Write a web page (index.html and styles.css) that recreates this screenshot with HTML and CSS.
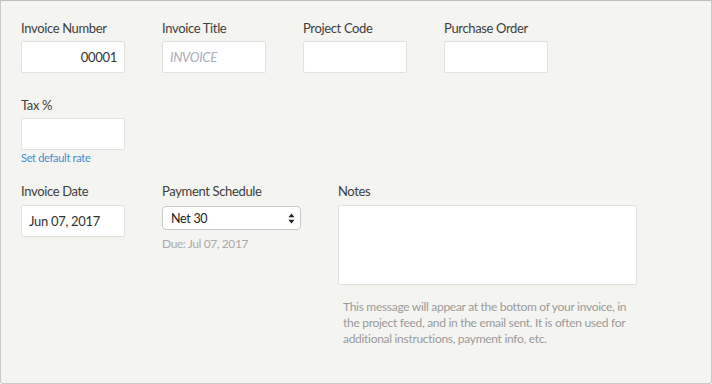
FILE: index.html
```html
<!DOCTYPE html>
<html lang="en">
<head>
    <meta charset="UTF-8">
    <title>Invoice Details</title>
    <link rel="stylesheet" href="styles.css">
</head>
<body>
    <div class="panel">
        <div class="row">
            <div class="field">
                <label>Invoice Number</label>
                <div class="input num">00001</div>
            </div>
            <div class="field">
                <label>Invoice Title</label>
                <div class="input placeholder">INVOICE</div>
            </div>
            <div class="field">
                <label>Project Code</label>
                <div class="input"></div>
            </div>
            <div class="field">
                <label>Purchase Order</label>
                <div class="input"></div>
            </div>
        </div>

        <div class="row tax-row">
            <div class="field">
                <label>Tax %</label>
                <div class="input"></div>
                <a class="link">Set default rate</a>
            </div>
        </div>

        <div class="row date-row">
            <div class="field">
                <label>Invoice Date</label>
                <div class="input date">Jun 07, 2017</div>
            </div>
            <div class="field wide">
                <label>Payment Schedule</label>
                <div class="select">
                    <span>Net 30</span>
                    <svg width="7" height="11" viewBox="0 0 7 11">
                        <path d="M3.5 0.5 L6.5 4.2 L0.5 4.2 Z" fill="#222"/>
                        <path d="M3.5 10.5 L6.5 6.8 L0.5 6.8 Z" fill="#222"/>
                    </svg>
                </div>
                <div class="due">Due: Jul 07, 2017</div>
            </div>
            <div class="field notes">
                <label>Notes</label>
                <div class="textarea"></div>
                <p class="help">This message will appear at the bottom of your invoice, in the project feed, and in the email sent. It is often used for additional instructions, payment info, etc.</p>
            </div>
        </div>
    </div>
</body>
</html>
```

FILE: styles.css
```css
body {
    margin: 0;
    font-family: Lato, sans-serif;
    color: #3a3a3a;
}

.panel {
    box-sizing: border-box;
    width: 712px;
    height: 384px;
    background-color: #f4f4f0;
    border: 1px solid #c9c9c6;
    border-top-color: #bdbdbb;
    border-radius: 0 0 3px 3px;
    padding: 19px 20px 0 20px;
}

.row {
    display: flex;
    gap: 37px;
}

.field {
    display: flex;
    flex-direction: column;
    width: 104px;
}

.field label {
    font-size: 13px;
    letter-spacing: -0.35px;
    line-height: 16px;
    margin-bottom: 5px;
    color: #404040;
}

.input {
    box-sizing: border-box;
    height: 32px;
    background-color: white;
    border: 1px solid #e1e1de;
    border-radius: 2px;
    font-size: 13px;
    letter-spacing: -0.3px;
    line-height: 30px;
    padding: 0 7px;
    color: #333;
}

.input.num {
    text-align: right;
}

.input.placeholder {
    font-style: italic;
    color: #a8adb4;
}

.tax-row {
    margin-top: 24px;
}

.link {
    font-size: 11px;
    letter-spacing: -0.3px;
    line-height: 14px;
    margin-top: 1px;
    color: #3f8fd2;
}

.date-row {
    margin-top: 18px;
}

.date-row .field label {
    margin-bottom: 6px;
}

.field.wide {
    width: 139px;
}

.select {
    box-sizing: border-box;
    height: 24px;
    margin-top: 1px;
    background-color: white;
    border: 1px solid #c9c9c6;
    border-radius: 4px;
    display: flex;
    align-items: center;
    justify-content: space-between;
    padding: 0 5px 0 8px;
    font-size: 12.5px;
    letter-spacing: -0.3px;
    color: #222;
}

.due {
    font-size: 12px;
    letter-spacing: -0.4px;
    line-height: 14px;
    margin-top: 7px;
    color: #aaa;
}

.field.notes {
    width: 299px;
}

.textarea {
    box-sizing: border-box;
    height: 80px;
    background-color: white;
    border: 1px solid #e1e1de;
    border-radius: 2px;
}

.help {
    margin: 14px 0 0 5px;
    font-size: 12px;
    letter-spacing: -0.3px;
    line-height: 16px;
    color: #9a9a9a;
}
```
